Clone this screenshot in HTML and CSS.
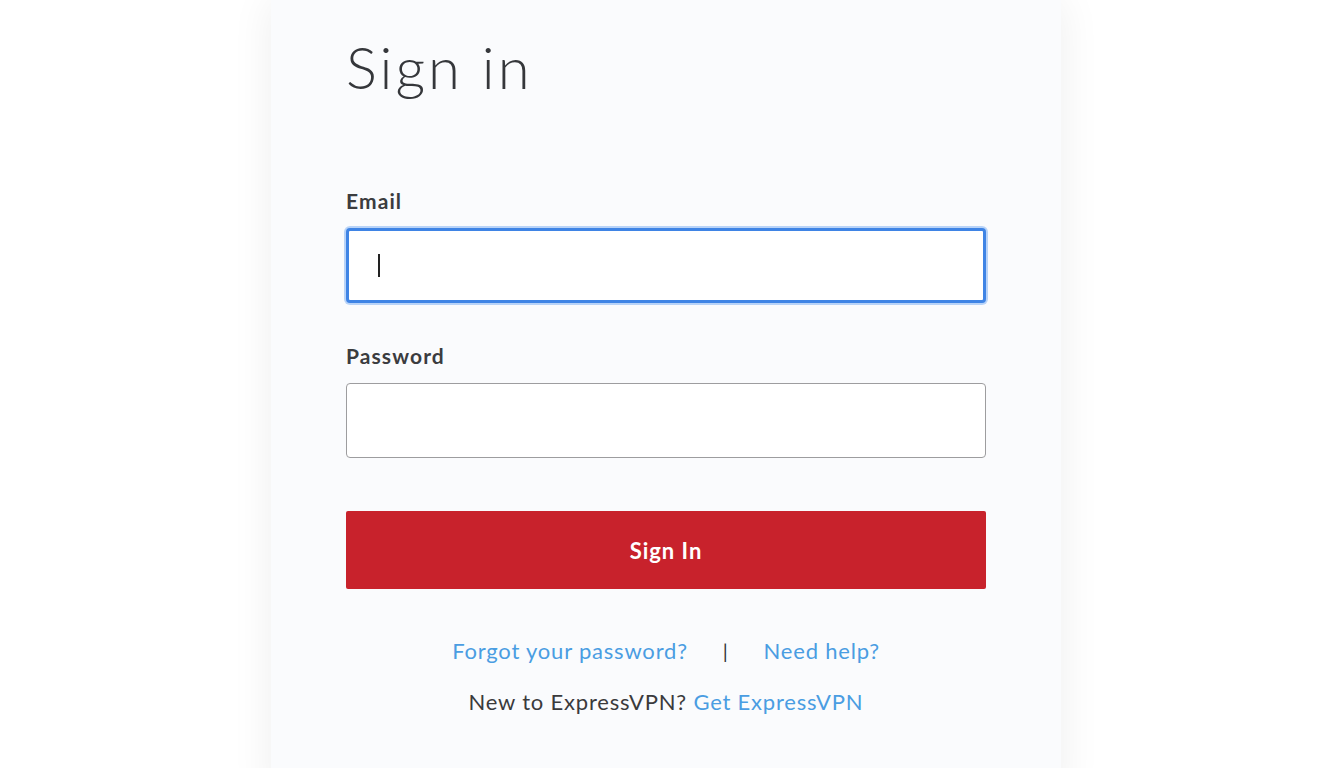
FILE: index.html
```html
<!DOCTYPE html>
<html lang="en">
<head>
<meta charset="utf-8">
<title>Sign in</title>
<link rel="stylesheet" href="styles.css">
</head>
<body>
<main class="card">
  <h1 class="title">Sign in</h1>
  <form class="form">
    <label class="label" for="email">Email</label>
    <div class="input input-focus"><span class="caret"></span></div>
    <label class="label label-pw" for="pw">Password</label>
    <div class="input"></div>
    <button class="btn" type="button">Sign In</button>
  </form>
  <div class="links">
    <a class="link">Forgot your password?</a>
    <span class="sep">|</span>
    <a class="link">Need help?</a>
  </div>
  <p class="new">New to ExpressVPN? <a class="link">Get ExpressVPN</a></p>
</main>
</body>
</html>
```
FILE: styles.css
```css
html, body {
  margin: 0;
  padding: 0;
  background: #ffffff;
  height: 768px;
  overflow: hidden;
  font-family: "Lato", "Open Sans", sans-serif;
}
.card {
  width: 790px;
  height: 800px;
  margin-left: 271px;
  background: #fafbfd;
  box-shadow: 0 0 40px rgba(0, 0, 0, 0.07);
  box-sizing: border-box;
  padding: 0 75px;
}
.title {
  margin: 0;
  padding-top: 27px;
  font-size: 58px;
  line-height: 80px;
  font-weight: 300;
  color: #35373b;
  letter-spacing: 3px;
}
.form {
  display: flex;
  flex-direction: column;
  margin-top: 82px;
}
.label {
  font-size: 21px;
  font-weight: 700;
  color: #3b3c3f;
  line-height: 24px;
  letter-spacing: 1.1px;
}
.label-pw { margin-top: 41px; }
.input {
  margin-top: 15px;
  height: 75px;
  box-sizing: border-box;
  border: 1px solid #9d9d9f;
  border-radius: 4px;
  background: #ffffff;
  display: flex;
  align-items: center;
  padding-left: 29px;
}
.input-focus {
  border: 3px solid #3f84e5;
  box-shadow: 0 0 0 2px rgba(140, 185, 245, 0.6);
}
.caret {
  display: block;
  width: 2px;
  height: 23px;
  background: #222;
}
.btn {
  margin-top: 53px;
  height: 78px;
  border: 0;
  border-radius: 2px;
  background: #c8222c;
  color: #ffffff;
  font-family: "Lato", sans-serif;
  font-size: 22px;
  font-weight: 700;
  letter-spacing: 1px;
  cursor: pointer;
}
.links {
  display: flex;
  justify-content: center;
  align-items: center;
  gap: 35px;
  margin-top: 48px;
  font-size: 22px;
  line-height: 28px;
  letter-spacing: 0.8px;
}
.link {
  color: #4a9de2;
  text-decoration: none;
}
.sep { color: #333; font-size: 20px; }
.new {
  margin: 23px 0 0;
  text-align: center;
  font-size: 22px;
  line-height: 28px;
  color: #3a3a3c;
  letter-spacing: 0.8px;
}
```
